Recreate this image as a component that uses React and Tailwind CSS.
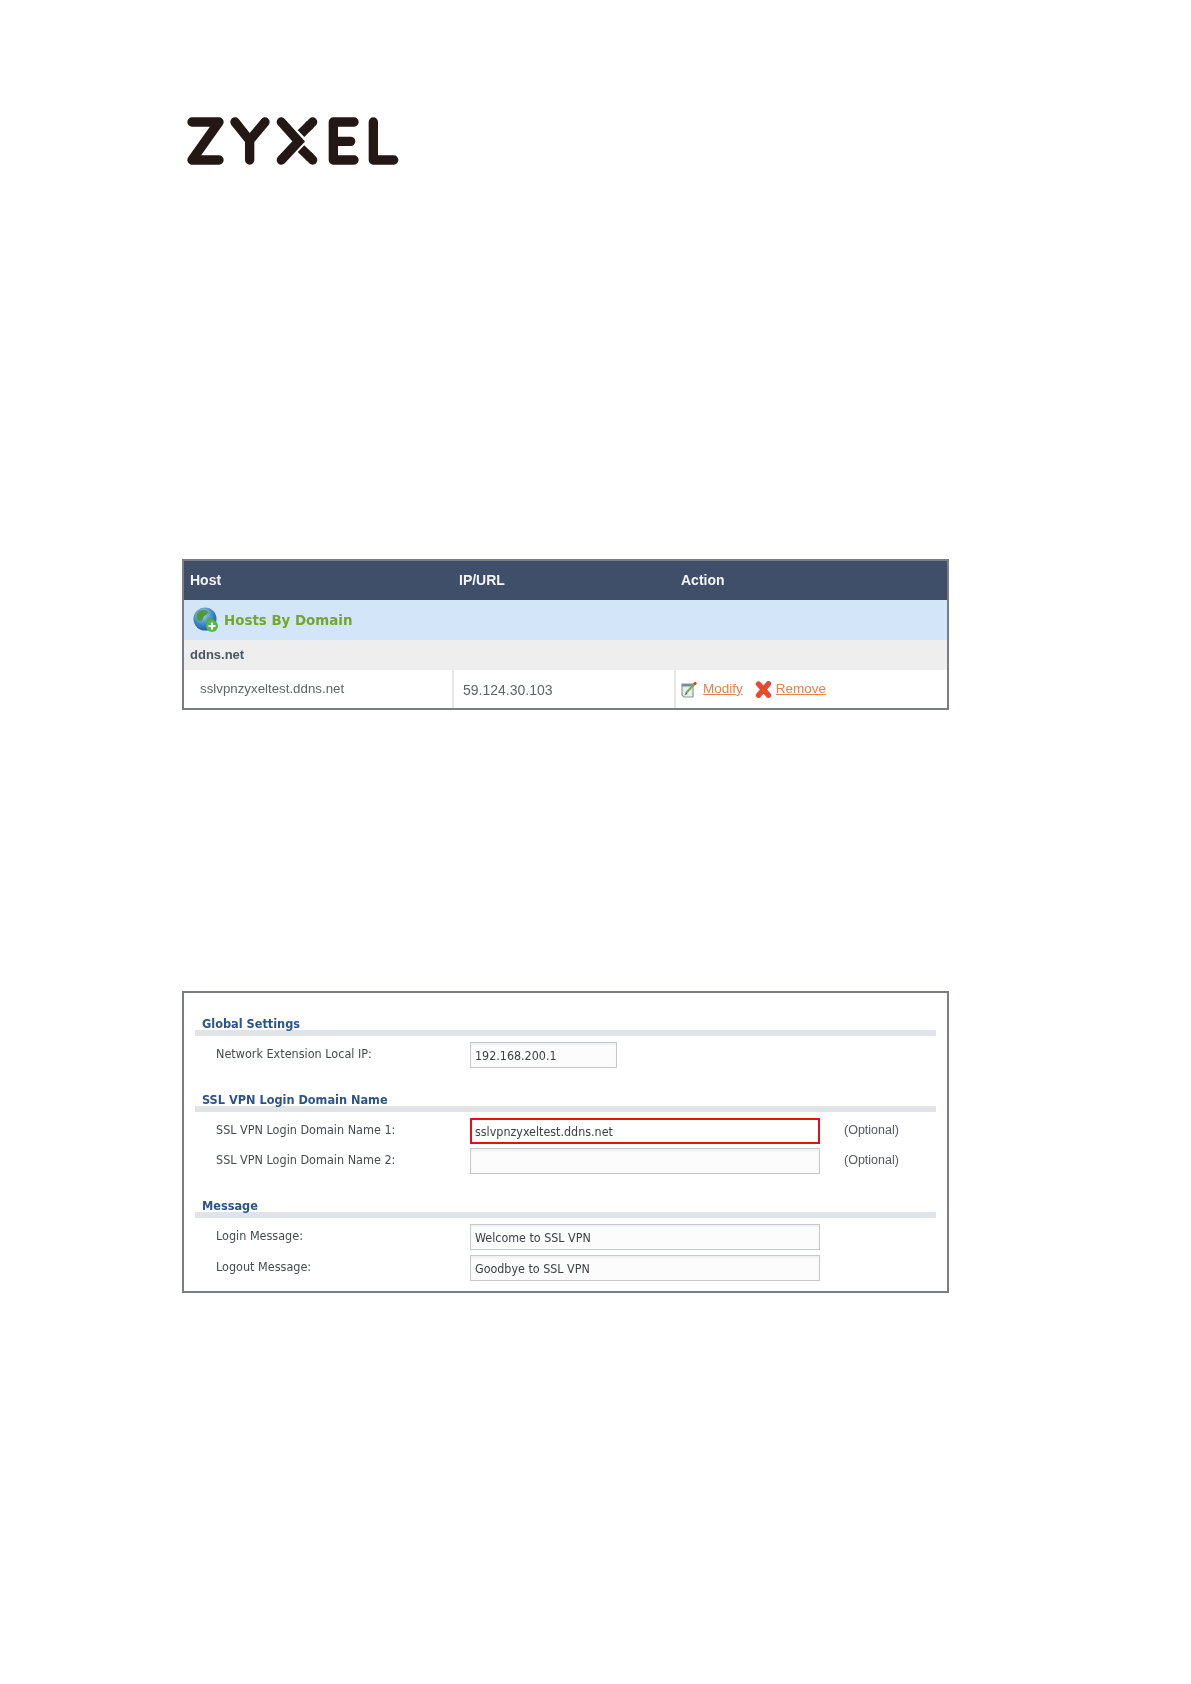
function Logo() {
  return (
    <svg width="220" height="55" viewBox="70 70 660 165" fill="none" stroke="#231815" strokeWidth="28" strokeLinecap="round" strokeLinejoin="round">
      <path d="M97 97H178L97 211H178" />
      <path d="M226 97L270 152L316 97M270 152V211" />
      <path d="M365 97L417 155L365 211" strokeLinejoin="miter" />
      <path d="M459 97L450 106" />
      <path d="M452 104L424 132" strokeLinecap="butt" />
      <path d="M459 211L450 202" />
      <path d="M452 204L424 177" strokeLinecap="butt" />
      <path d="M583 97H521V211H583M521 155H573" />
      <path d="M641 97V211H702" />
    </svg>
  );
}

function GlobeIcon() {
  return (
    <svg width="26" height="26" viewBox="0 0 26 26">
      <defs>
        <radialGradient id="gb" cx="0.4" cy="0.3" r="0.8">
          <stop offset="0" stopColor="#a9d4ee" />
          <stop offset="0.55" stopColor="#3f86c4" />
          <stop offset="1" stopColor="#184f8c" />
        </radialGradient>
      </defs>
      <circle cx="12" cy="12" r="11.5" fill="url(#gb)" />
      <path d="M6 4C10 2 14 3 15 5C15 8 11 8 10 11C10 14 7 15 5 13C3 10 3 7 6 4Z" fill="#4c9a3c" />
      <path d="M15 11C18 10 21 12 21 15C20 18 17 20 15 19C14 16 13 13 15 11Z" fill="#5aa540" />
      <circle cx="19" cy="19" r="6" fill="#54b948" />
      <path d="M19 15.5V22.5M15.5 19H22.5" stroke="#fff" strokeWidth="2.2" />
    </svg>
  );
}

function EditIcon() {
  return (
    <svg width="17" height="17" viewBox="0 0 17 17">
      <path d="M1 3H12V16H3L1 14Z" fill="#e8edf0" stroke="#8a979f" strokeWidth="1.2" />
      <path d="M1 3H12V5.5H1Z" fill="#7d8a92" />
      <path d="M5 12L14 2.5" stroke="#7ab04a" strokeWidth="2.2" />
      <path d="M13 3.5L15 1.5" stroke="#dc3a34" strokeWidth="2.6" />
      <path d="M3.5 14L5 11.5L6.5 13Z" fill="#5b4a30" />
    </svg>
  );
}

function RemoveIcon() {
  return (
    <svg width="17" height="17" viewBox="0 0 17 17">
      <path d="M3.5 3L13.5 14.2M13.5 2.8L3.5 14.2" stroke="#ea4a2b" strokeWidth="5.4" strokeLinecap="round" />
    </svg>
  );
}

function Heading({ children, first }) {
  return (
    <div className={first ? "" : "mt-[24px]"}>
      <div className="h-[14px] pl-[7px] pt-[1px] font-['DejaVu_Sans_Condensed','DejaVu_Sans',sans-serif] text-[12.6px] leading-[14px] font-bold text-[#2d5487]">{children}</div>
      <div className="h-[6px] bg-[#e1e4e6]" />
    </div>
  );
}

function Field({ label, value, wide = true, red, optional, className = "" }) {
  return (
    <div className={`flex h-[26px] ${className}`}>
      <div className="w-[275px] shrink-0 pl-[21px] pt-[4px] font-['DejaVu_Sans_Condensed','DejaVu_Sans',sans-serif] text-[12.5px] leading-[16px] text-[#444b50]">{label}</div>
      <div
        className={`${wide ? "w-[350px]" : "w-[147px]"} h-full shrink-0 font-['DejaVu_Sans_Condensed','DejaVu_Sans',sans-serif] text-[12.4px] leading-[16px] text-[#3c4144] ${
          red ? "border-2 border-[#e3101c] bg-white pl-[3px] pt-[4px]" : "border border-[#c6c9cc] bg-[#fcfcfc] pl-[4px] pt-[5px] shadow-[inset_0_2px_2px_#f0f1f2]"
        }`}
      >
        {value}
      </div>
      {optional && <div className="ml-[24px] pt-[4px] text-[12.5px] leading-[16px] text-[#555b60]">(Optional)</div>}
    </div>
  );
}

export default function App() {
  return (
    <div className="h-[1684px] bg-white pl-[182px] font-['Liberation_Sans',Arial,sans-serif]">
      <div className="pt-[113px] pl-[1px] h-[559px]">
        <Logo />
      </div>

      <div className="w-[767px] border-2 border-[#7a7e82] bg-white blur-[0.35px]">
        <div className="grid h-[39px] grid-cols-[270px_222px_1fr] items-center bg-[#3f4f69] text-[14px] font-bold text-[#f2f4f7]">
          <div className="pl-[6px]">Host</div>
          <div className="pl-[5px]">IP/URL</div>
          <div className="pl-[5px]">Action</div>
        </div>
        <div className="flex h-[40px] items-center bg-[#d3e5f8] pl-[9px]">
          <GlobeIcon />
          <span className="ml-[5px] pt-[2px] font-['DejaVu_Sans',sans-serif] text-[13.4px] font-bold text-[#73a52f]">Hosts By Domain</span>
        </div>
        <div className="flex h-[30px] items-center bg-[#eeeeee] pl-[6px] text-[13px] font-bold text-[#4b5663]">ddns.net</div>
        <div className="grid h-[38px] grid-cols-[270px_222px_1fr]">
          <div className="border-r-2 border-[#e6e6e6] pl-[16px] pt-[10px] text-[13.3px] leading-[17px] text-[#5f6468]">sslvpnzyxeltest.ddns.net</div>
          <div className="border-r-2 border-[#e6e6e6] pl-[9px] pt-[11px] text-[14px] leading-[18px] text-[#5f6468]">59.124.30.103</div>
          <div className="flex items-center pl-[5px] text-[13.5px]">
            <EditIcon />
            <span className="ml-[5px] text-[#e5814f] underline">Modify</span>
            <span className="ml-[12px]"><RemoveIcon /></span>
            <span className="ml-[4px] text-[#e5814f] underline">Remove</span>
          </div>
        </div>
      </div>

      <div className="mt-[281px] w-[767px] border-2 border-[#7a7e82] bg-white px-[11px] pt-[23px] pb-[10px] blur-[0.35px]">
        <Heading first>Global Settings</Heading>
        <Field label="Network Extension Local IP:" value="192.168.200.1" wide={false} className="mt-[6px]" />
        <Heading>SSL VPN Login Domain Name</Heading>
        <Field label="SSL VPN Login Domain Name 1:" value="sslvpnzyxeltest.ddns.net" red optional className="mt-[6px]" />
        <Field label="SSL VPN Login Domain Name 2:" value="" optional className="mt-[4px]" />
        <Heading>Message</Heading>
        <Field label="Login Message:" value="Welcome to SSL VPN" className="mt-[6px]" />
        <Field label="Logout Message:" value="Goodbye to SSL VPN" className="mt-[5px]" />
      </div>
    </div>
  );
}
